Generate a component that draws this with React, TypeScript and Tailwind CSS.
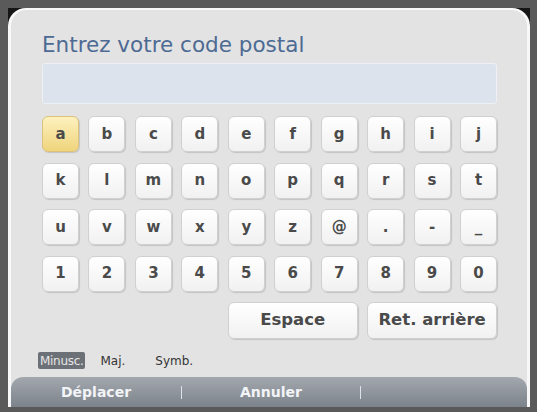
import React from 'react';

const rows = [
  ['a', 'b', 'c', 'd', 'e', 'f', 'g', 'h', 'i', 'j'],
  ['k', 'l', 'm', 'n', 'o', 'p', 'q', 'r', 's', 't'],
  ['u', 'v', 'w', 'x', 'y', 'z', '@', '.', '-', '_'],
  ['1', '2', '3', '4', '5', '6', '7', '8', '9', '0'],
];

const keyBase =
  'h-[36px] flex items-center justify-center rounded-[6px] border font-bold text-[#4a4a4a] shadow-[1px_1px_1px_rgba(0,0,0,0.14)]';
const keyIdle = 'bg-gradient-to-b from-white to-[#f1f1f1] border-[#d0d0d0]';
const keyFocus = 'bg-gradient-to-b from-[#fdf1bd] to-[#efd47c] border-[#dcc27a]';

function Key({ label, active, wide }: { label: string; active?: boolean; wide?: boolean }) {
  return (
    <div
      className={`${keyBase} ${active ? keyFocus : keyIdle} ${
        wide ? 'col-span-3 h-[37px] text-[16.5px]' : 'text-[15px]'
      }`}
    >
      {label}
    </div>
  );
}

export default function App() {
  return (
    <div
      className="w-[537px] h-[412px] bg-[#5a5a5a] pt-[8px] pl-[8px] pr-[7px] pb-[5px]"
      style={{ fontFamily: '"DejaVu Sans", sans-serif' }}
    >
      {/* dark strip behind the rounded panel top, visible only in the corners */}
      <div className="h-full bg-[#5a5a5a] shadow-[inset_0_16px_0_0_#161616]">
        <div className="h-full flex flex-col rounded-t-[18px] bg-[#e3e3e3] border-x-[3px] border-t-[2px] border-[#f8f8f8]">
          <div className="pl-[31px] pr-[30px] flex flex-col">
            <h1 className="mt-[22px] h-[25px] leading-[25px] text-[21.5px] text-[#4d6a93]">
              Entrez votre code postal
            </h1>

            <div className="mt-[6px] h-[41px] rounded-[3px] bg-[#dde3ec] border border-[#edf0f5]" />

            <div className="mt-[12px] grid grid-cols-10 gap-x-[9.5px] gap-y-[10.5px]">
              {rows.flat().map((k, i) => (
                <Key key={k} label={k} active={i === 0} />
              ))}
              <div className="col-span-4" />
              <Key label="Espace" wide />
              <Key label="Ret. arrière" wide />
            </div>

            {/* keyboard layout switch */}
            <div className="mt-[13px] -ml-[4px] flex items-center h-[17px] text-[12px] text-[#333]">
              <span className="h-[17px] px-[2px] flex items-center bg-[#6c7178] text-[#e6e6e6] rounded-[2px] tracking-[-0.3px]">
                Minusc.
              </span>
              <span className="ml-[15px]">Maj.</span>
              <span className="ml-[30px]">Symb.</span>
            </div>
          </div>

          <div className="mt-auto h-[30px] rounded-t-[12px] bg-gradient-to-b from-[#a3a8af] to-[#7d838a] flex items-center text-[14px] font-bold text-[#f2f4f7]">
            <div className="w-[170px] text-center">Déplacer</div>
            <div className="w-px h-[13px] bg-[#dfe2e6]" />
            <div className="w-[178px] text-center">Annuler</div>
            <div className="w-px h-[13px] bg-[#dfe2e6]" />
            <div className="flex-1" />
          </div>
        </div>
      </div>
    </div>
  );
}
